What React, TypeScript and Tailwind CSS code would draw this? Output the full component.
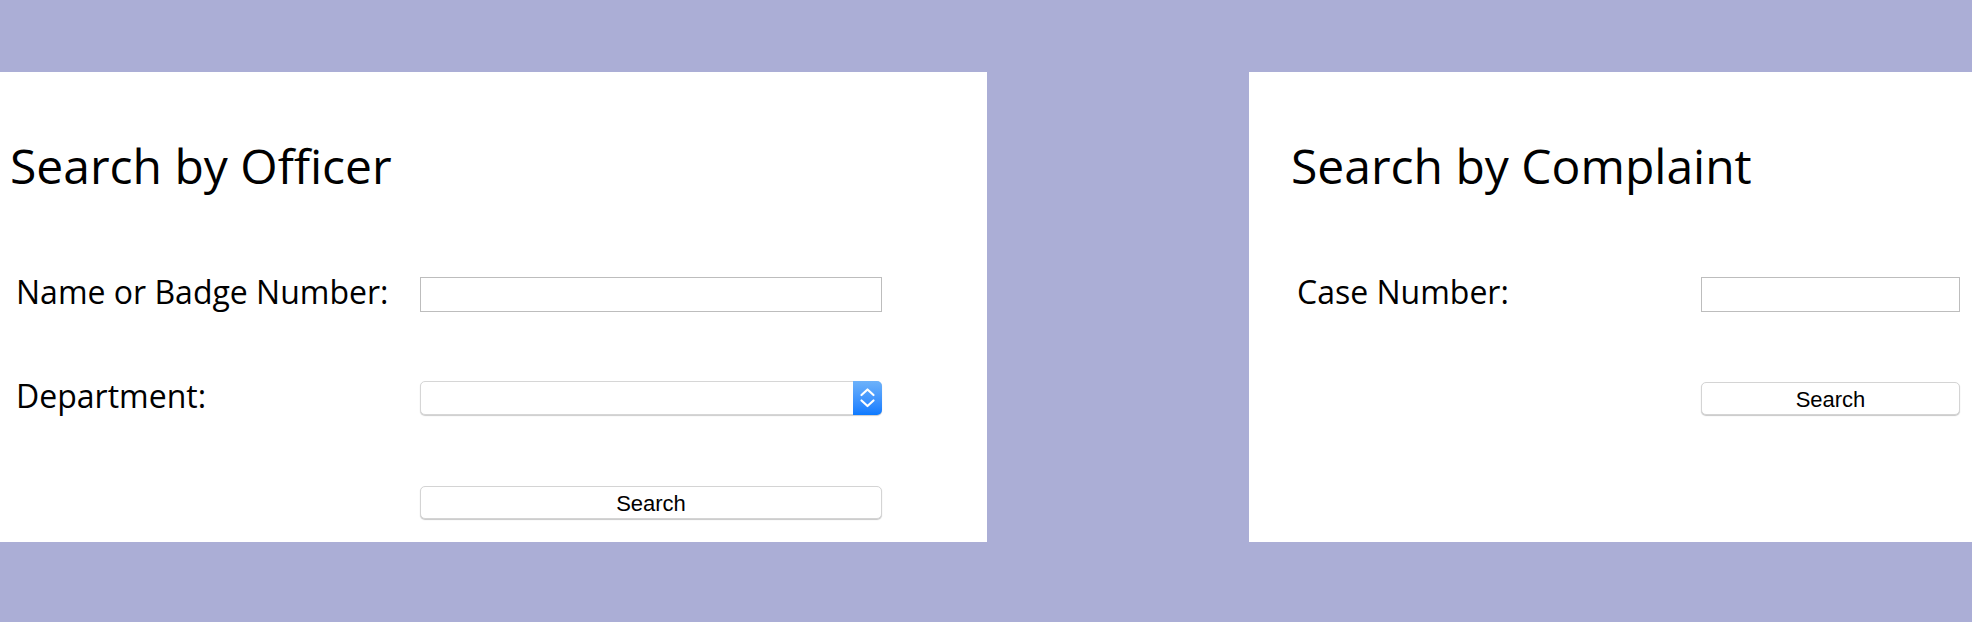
import type { ReactNode } from "react";

function Panel({ title, children }: { title: string; children: ReactNode }) {
  return (
    <section className="flex h-[470px] w-[1019px] flex-none flex-col bg-white pl-[42px]">
      <h1 className="mt-[58px] text-[48px] leading-[72px] font-normal text-black">{title}</h1>
      <div className="mt-[40px] flex flex-col pl-[6px]">{children}</div>
    </section>
  );
}

function Row({ label, children }: { label?: string; children: ReactNode }) {
  return (
    <div className="flex h-[104px] items-center">
      <span className="mb-[4px] w-[404px] flex-none text-[32px] leading-[44px] text-black">{label}</span>
      {children}
    </div>
  );
}

function TextBox({ width }: { width: string }) {
  return (
    <input
      type="text"
      className={`${width} h-[35px] border border-[#bdbdbd] bg-white px-2 text-[20px] outline-none`}
    />
  );
}

function SearchButton({ width }: { width: string }) {
  return (
    <button
      type="button"
      className={`${width} h-[33px] rounded-[5px] border border-[#d4d4d4] bg-white pt-[3px] font-['Liberation_Sans',Arial,sans-serif] text-[22px] leading-none text-black shadow-[0_1px_1px_rgba(0,0,0,0.22)]`}
    >
      Search
    </button>
  );
}

function DepartmentSelect() {
  return (
    <div className="relative h-[34px] w-[462px]">
      <select className="h-full w-full appearance-none rounded-[5px] border border-[#d6d6d6] bg-white shadow-[0_1px_1px_rgba(0,0,0,0.2)] outline-none">
        <option value=""></option>
      </select>
      <div className="pointer-events-none absolute top-0 right-0 flex h-[34px] w-[29px] items-center justify-center rounded-r-[5px] bg-linear-to-b from-[#6db2fa] to-[#0a7aff]">
        <svg width="29" height="34" viewBox="0 0 29 34" fill="none">
          <path d="M8.5 14 L14.5 8.5 L20.5 14" stroke="white" strokeWidth="2.2" strokeLinecap="round" strokeLinejoin="round" />
          <path d="M8.5 19.5 L14.5 25 L20.5 19.5" stroke="white" strokeWidth="2.2" strokeLinecap="round" strokeLinejoin="round" />
        </svg>
      </div>
    </div>
  );
}

export default function App() {
  return (
    <div className="flex h-[622px] w-full items-start overflow-hidden bg-[#abaed6] pt-[72px] font-['Open_Sans',sans-serif]">
      <div className="-ml-8 flex gap-[262px]">
        <Panel title="Search by Officer">
          <Row label="Name or Badge Number:">
            <TextBox width="w-[462px]" />
          </Row>
          <Row label="Department:">
            <DepartmentSelect />
          </Row>
          <Row>
            <SearchButton width="w-[462px]" />
          </Row>
        </Panel>
        <Panel title="Search by Complaint">
          <Row label="Case Number:">
            <TextBox width="w-[259px]" />
          </Row>
          <Row>
            <SearchButton width="w-[259px]" />
          </Row>
        </Panel>
      </div>
    </div>
  );
}
